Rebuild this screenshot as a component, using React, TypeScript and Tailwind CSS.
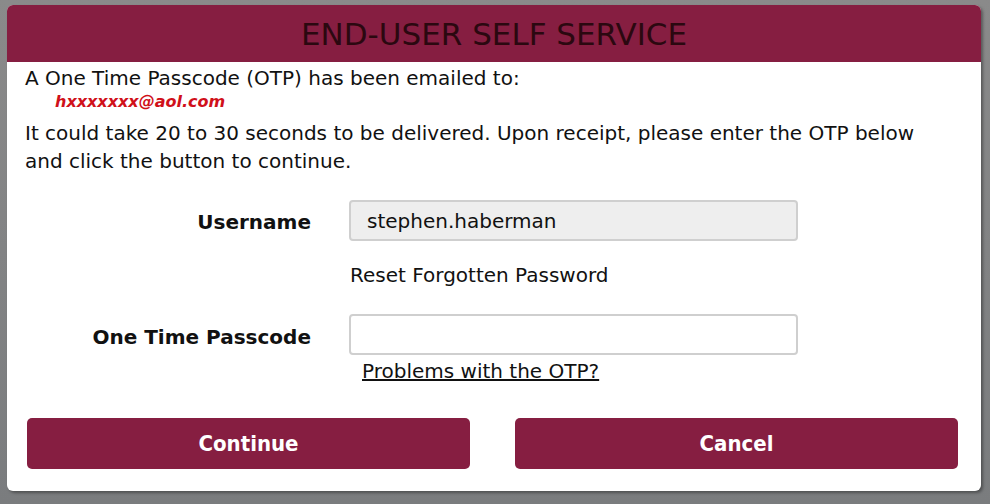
import React, { useState } from 'react';

const SelfServiceOtp: React.FC = () => {
    const [otp, setOtp] = useState<string>('');

    return (
        <div className="w-[990px] h-[504px] bg-gradient-to-b from-[#8a8a8a] to-[#7a7c7e] pt-[5px] pl-[7px] font-['DejaVu_Sans',sans-serif]">
            <div className="w-[974px] h-[486px] bg-white rounded-[6px] overflow-hidden shadow-[2px_2px_3px_rgba(0,0,0,0.35)]">
                <div className="h-[57px] bg-[#861e41] flex items-center justify-center">
                    <h1 className="text-[31px] leading-none text-[#2b0810] mt-[2px]">END-USER SELF SERVICE</h1>
                </div>

                <div className="pl-[18px] pr-[40px] pt-[2px] text-[20px] text-[#111]">
                    <p className="leading-[28px]">A One Time Passcode (OTP) has been emailed to:</p>
                    <p className="leading-[20px] pl-[30px] text-[16px] font-bold italic text-[#d0101a]">hxxxxxxx@aol.com</p>
                    <p className="leading-[28px] mt-[7px]">
                        It could take 20 to 30 seconds to be delivered. Upon receipt, please enter the OTP below and click the button to continue.
                    </p>
                </div>

                <div className="mt-[25px] text-[20px] text-[#111]">
                    <div className="flex items-center">
                        <label htmlFor="username" className="w-[304px] text-right font-bold mt-[2px]">Username</label>
                        <input
                            id="username"
                            readOnly
                            value="stephen.haberman"
                            className="ml-[38px] w-[449px] h-[41px] px-[16px] bg-[#eeeeee] border-2 border-[#cfcfcf] rounded-[4px] text-[20px] text-[#111] outline-none"
                        />
                    </div>
                    <div className="ml-[343px] mt-[21px] leading-[26px]">Reset Forgotten Password</div>
                    <div className="flex items-center mt-[26px]">
                        <label htmlFor="otp" className="w-[304px] text-right font-bold mt-[4px]">One Time Passcode</label>
                        <input
                            id="otp"
                            value={otp}
                            onChange={(e) => setOtp(e.target.value)}
                            className="ml-[38px] w-[449px] h-[41px] px-[16px] bg-white border-2 border-[#cfcfcf] rounded-[4px] text-[20px] text-[#111] outline-none"
                        />
                    </div>
                    <div className="ml-[355px] mt-[3px] leading-[26px]">
                        <a href="#" className="underline text-[#111]">Problems with the OTP?</a>
                    </div>
                </div>

                <div className="flex gap-[45px] pl-[20px] mt-[34px]">
                    <button className="w-[443px] h-[51px] bg-[#861e41] text-white font-bold text-[22px] rounded-[5px] font-['DejaVu_Sans_Condensed','DejaVu_Sans',sans-serif]">Continue</button>
                    <button className="w-[443px] h-[51px] bg-[#861e41] text-white font-bold text-[22px] rounded-[5px] font-['DejaVu_Sans_Condensed','DejaVu_Sans',sans-serif]">Cancel</button>
                </div>
            </div>
        </div>
    );
};

export default function App() {
    return <SelfServiceOtp />;
}
